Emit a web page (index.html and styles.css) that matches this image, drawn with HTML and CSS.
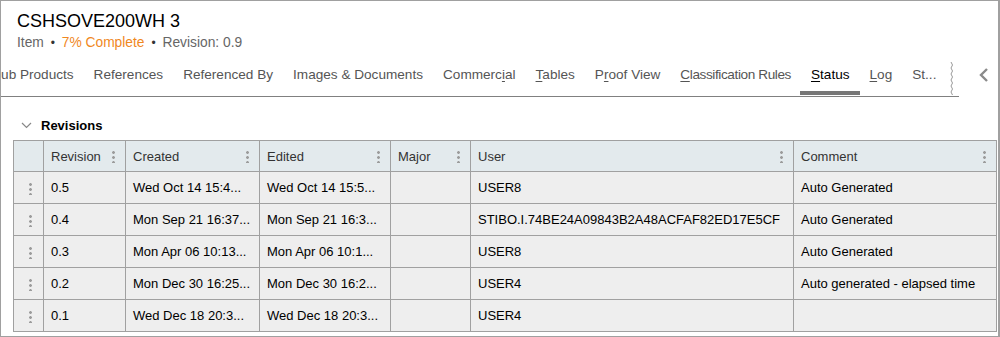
FILE: index.html
```html
<!DOCTYPE html>
<html>
<head>
<meta charset="utf-8">
<link rel="stylesheet" href="styles.css">
</head>
<body>
<div class="frame">
  <header class="head">
    <h1 class="title">CSHSOVE200WH 3</h1>
    <div class="sub">Item <span class="dot">•</span> <span class="orange">7% Complete</span> <span class="dot">•</span> Revision: 0.9</div>
  </header>
  <div class="tabbar">
    <div class="tabs">
      <div class="tabtrack">
        <span class="tab first">Sub Products</span>
        <span class="tab">References</span>
        <span class="tab">Referenced By</span>
        <span class="tab">Images &amp; Documents</span>
        <span class="tab">Commerc<u>i</u>al</span>
        <span class="tab"><u>T</u>ables</span>
        <span class="tab">P<u>r</u>oof View</span>
        <span class="tab tight"><u>C</u>lassification Rules</span>
        <span class="tab active"><u>S</u>tatus</span>
        <span class="tab"><u>L</u>og</span>
        <span class="tab">St...</span>
      </div>
      <svg class="wave" width="6" height="34" viewBox="0 0 6 34"><path d="M2 0 L3.5 3 L2 6 L3.5 9 L2 12 L3.5 15 L2 18 L3.5 21 L2 24 L3.5 27 L2 30 L3.5 33" fill="none" stroke="#999" stroke-width="1"/></svg>
    </div>
    <div class="chev">
      <svg width="12" height="16" viewBox="0 0 12 16"><path d="M9 2 L3 8 L9 14" fill="none" stroke="#8a8a8a" stroke-width="2.4"/></svg>
    </div>
  </div>
  <section class="section">
    <div class="sechead">
      <svg class="down" width="11" height="8" viewBox="0 0 11 8"><path d="M1 2 L5.5 6.5 L10 2" fill="none" stroke="#888" stroke-width="1.2"/></svg>
      <span class="sectitle">Revisions</span>
    </div>
    <table class="grid">
      <colgroup>
        <col class="c0"><col class="c1"><col class="c2"><col class="c3"><col class="c4"><col class="c5"><col class="c6">
      </colgroup>
      <thead>
        <tr>
          <th></th>
          <th><div class="hc"><span>Revision</span><i class="keb"></i></div></th>
          <th><div class="hc"><span>Created</span><i class="keb"></i></div></th>
          <th><div class="hc"><span>Edited</span><i class="keb"></i></div></th>
          <th><div class="hc"><span>Major</span><i class="keb"></i></div></th>
          <th><div class="hc"><span>User</span><i class="keb"></i></div></th>
          <th><div class="hc"><span>Comment</span><i class="keb"></i></div></th>
        </tr>
      </thead>
      <tbody>
        <tr><td class="h"><i class="keb"></i></td><td>0.5</td><td>Wed Oct 14 15:4...</td><td>Wed Oct 14 15:5...</td><td></td><td>USER8</td><td>Auto Generated</td></tr>
        <tr><td class="h"><i class="keb"></i></td><td>0.4</td><td>Mon Sep 21 16:37...</td><td>Mon Sep 21 16:3...</td><td></td><td>STIBO.I.74BE24A09843B2A48ACFAF82ED17E5CF</td><td>Auto Generated</td></tr>
        <tr><td class="h"><i class="keb"></i></td><td>0.3</td><td>Mon Apr 06 10:13...</td><td>Mon Apr 06 10:1...</td><td></td><td>USER8</td><td>Auto Generated</td></tr>
        <tr><td class="h"><i class="keb"></i></td><td>0.2</td><td>Mon Dec 30 16:25...</td><td>Mon Dec 30 16:2...</td><td></td><td>USER4</td><td>Auto generated - elapsed time</td></tr>
        <tr><td class="h"><i class="keb"></i></td><td>0.1</td><td>Wed Dec 18 20:3...</td><td>Wed Dec 18 20:3...</td><td></td><td>USER4</td><td></td></tr>
      </tbody>
    </table>
  </section>
</div>
</body>
</html>
```
FILE: styles.css
```css
* { box-sizing: border-box; }
html, body { margin: 0; padding: 0; background: #fff; }
body { font-family: "Liberation Sans", Arial, sans-serif; font-size: 13px; color: #000; }
.frame {
  width: 1000px; height: 337px;
  border: 1px solid #a0a0a0; border-right-width: 2px;
  overflow: hidden;
}
.head { padding: 8px 0 0 16px; }
.title { margin: 0; font-size: 18px; font-weight: normal; line-height: 24px; color: #000; }
.sub { font-size: 13.8px; line-height: 18px; color: #666; margin-top: 1px; }
.orange { color: #f0881e; }
.dot { color: #333; font-size: 12px; margin: 0 3px; }
.tabbar { display: flex; height: 45px; }
.tabs {
  width: 958px; height: 45px; display: flex; align-items: flex-start;
  border-bottom: 1px solid #808080; overflow: hidden;
}
.tabtrack { display: flex; gap: 20px; margin-left: -9px; flex: 1; overflow: hidden; }
.tab {
  flex: none; color: #555; font-size: 13.6px; line-height: 32px; height: 43px; padding-top: 7px;
  border-bottom: 4px solid transparent; white-space: nowrap;
}
.tab.tight { letter-spacing: -0.4px; }
.tab u { text-decoration: underline; text-underline-offset: 2px; }
.tab.active { color: #000; border-bottom-color: #777; padding-left: 11px; padding-right: 10px; margin: 0 -10px 0 -11px; }
.wave { flex: none; align-self: flex-end; margin-right: 4px; }
.chev { flex: 1; display: flex; align-items: center; justify-content: flex-end; padding-right: 8px; }
.section { padding: 0 0 0 12px; }
.sechead { display: flex; align-items: center; height: 18px; margin-top: 19px; padding-left: 8px; }
.down { margin-right: 9px; }
.sectitle { font-weight: bold; font-size: 13px; }
.grid {
  border-collapse: collapse; table-layout: fixed; width: 983px; margin-top: 6px;
  border: 1px solid #a0a0a0;
}
.c0 { width: 30px; } .c1 { width: 82px; } .c2 { width: 134px; } .c3 { width: 131px; }
.c4 { width: 80px; } .c5 { width: 323px; } .c6 { width: 203px; }
.grid th, .grid td { border: 1px solid #a0a0a0; padding: 0 7px; white-space: nowrap; overflow: hidden; text-align: left; }
.grid th { background: #e3eaed; height: 31px; font-weight: normal; color: #333; padding-right: 10px; }
.grid td { background: #eeeeee; height: 32px; color: #000; }
.hc { display: flex; align-items: center; justify-content: space-between; }
.keb {
  display: inline-block; width: 3px; height: 13px; flex: none;
  background: radial-gradient(circle, #9c9c9c 1.3px, transparent 1.5px) 0 0 / 3px 5px repeat-y;
}
.grid td.h { text-align: center; padding: 0 0 0 3px; }
.grid td.h .keb { vertical-align: middle; }
```
